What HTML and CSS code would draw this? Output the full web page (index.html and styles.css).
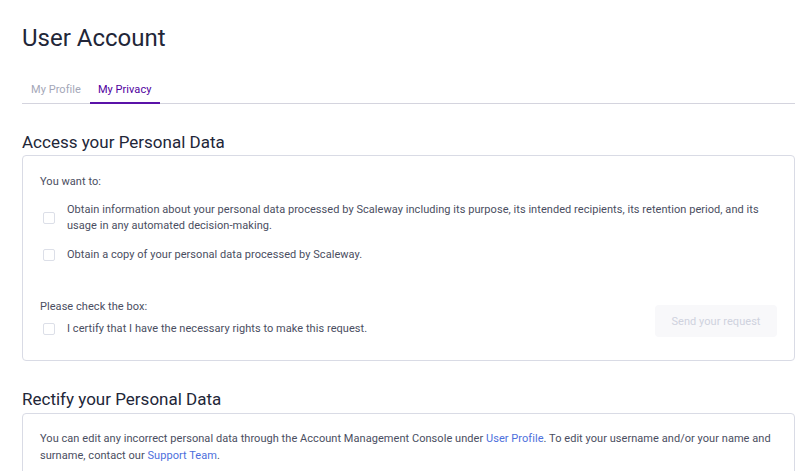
FILE: index.html
```html
<!DOCTYPE html>
<html lang="en">
<head>
<meta charset="utf-8">
<title>User Account</title>
<link rel="stylesheet" href="styles.css">
</head>
<body>
<main class="page">
  <h1 class="title">User Account</h1>
  <nav class="tabs">
    <a class="tab">My Profile</a>
    <a class="tab tab-active">My Privacy</a>
  </nav>

  <section class="section">
    <h2 class="heading">Access your Personal Data</h2>
    <div class="card card-access">
      <p class="label">You want to:</p>
      <label class="check check-first">
        <span class="box"></span>
        <span class="check-text">Obtain information about your personal data processed by Scaleway including its purpose, its intended recipients, its retention period, and its usage in any automated decision-making.</span>
      </label>
      <label class="check check-second">
        <span class="box"></span>
        <span class="check-text">Obtain a copy of your personal data processed by Scaleway.</span>
      </label>
      <div class="confirm-row">
        <div class="confirm">
          <p class="label">Please check the box:</p>
          <label class="check check-confirm">
            <span class="box"></span>
            <span class="check-text">I certify that I have the necessary rights to make this request.</span>
          </label>
        </div>
        <button class="button" disabled>Send your request</button>
      </div>
    </div>
  </section>

  <section class="section section-rectify">
    <h2 class="heading heading-rectify">Rectify your Personal Data</h2>
    <div class="card card-rectify">
      <p class="text">You can edit any incorrect personal data through the Account Management Console under <a class="link">User Profile</a>. To edit your username and/or your name and surname, contact our <a class="link">Support Team</a>.</p>
    </div>
  </section>
</main>
</body>
</html>
```

FILE: styles.css
```css
* { box-sizing: border-box; }
html, body { margin: 0; padding: 0; background: #ffffff; }
body {
  font-family: "Roboto", "Liberation Sans", sans-serif;
  color: #4a4e61;
  font-size: 11px;
  line-height: 16px;
  letter-spacing: 0.05px;
}
.page {
  padding: 22px 12px 0 22px;
}
.title {
  margin: 0;
  font-size: 24px;
  line-height: 32px;
  font-weight: 400;
  color: #222638;
  letter-spacing: 0;
}
.tabs {
  display: flex;
  margin-top: 28px;
  border-bottom: 1px solid #d4d4de;
}
.tab {
  display: block;
  padding: 0 9px 4px 9px;
  line-height: 16px;
  color: #a4a7b8;
  font-size: 11px;
  margin-bottom: -1px;
  border-bottom: 2px solid transparent;
}
.tab-active {
  color: #5100a0;
  border-bottom-color: #5a12a8;
  padding-left: 8px;
}
.section {
  margin-top: 26px;
}
.section-rectify {
  margin-top: 26px;
}
.heading {
  margin: 0 0 1px 0;
  font-size: 17px;
  line-height: 24px;
  font-weight: 400;
  color: #222638;
  letter-spacing: 0;
}
.heading-rectify {
  margin-bottom: 2px;
}
.card {
  border: 1px solid #d9dbe5;
  border-radius: 4px;
  background: #ffffff;
}
.card-access {
  display: flex;
  flex-direction: column;
  padding: 18px 17px 23px 17px;
}
.label {
  margin: 0;
}
.check {
  display: flex;
  align-items: center;
}
.check-first { margin-top: 12px; }
.check-second { margin-top: 13px; }
.check-confirm { margin-top: 6px; }
.box {
  flex: none;
  width: 12px;
  height: 12px;
  margin: 0 12px 0 3px;
  border: 1px solid #dcdfe8;
  border-radius: 2px;
  background: #ffffff;
}
.confirm-row {
  display: flex;
  align-items: flex-end;
  justify-content: space-between;
  margin-top: 36px;
}
.button {
  flex: none;
  width: 122px;
  height: 32px;
  border: none;
  border-radius: 4px;
  background: #f8f8fa;
  color: #cfd2de;
  font-family: inherit;
  font-size: 11px;
  letter-spacing: 0.05px;
}
.card-rectify {
  padding: 16px 17px 16px 17px;
  line-height: 17px;
}
.text {
  margin: 0;
}
.link {
  color: #4d6fdc;
}
```
